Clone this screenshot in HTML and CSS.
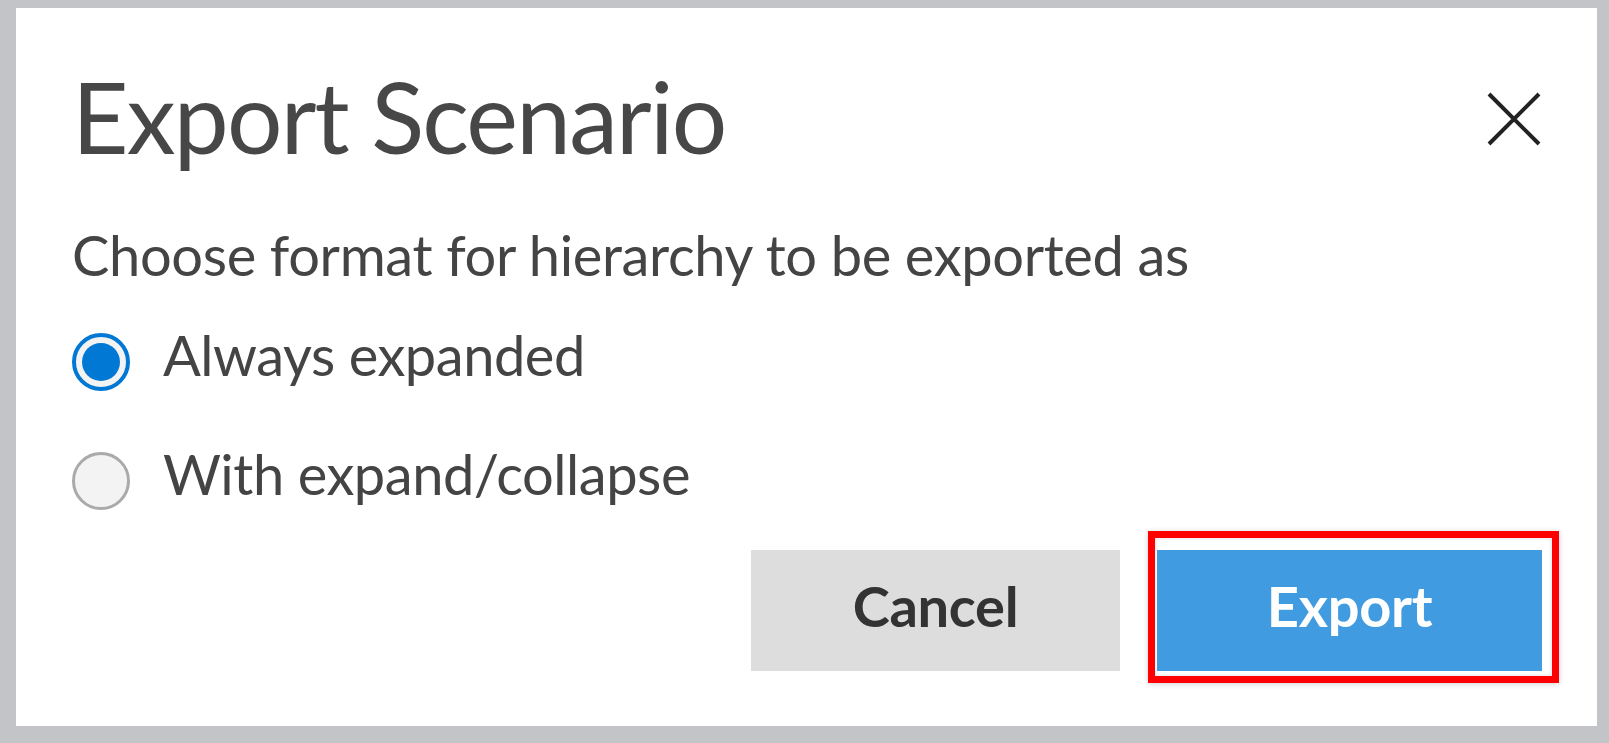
FILE: index.html
```html
<!DOCTYPE html>
<html lang="en">
<head>
<meta charset="utf-8">
<title>Export Scenario</title>
<link rel="stylesheet" href="styles.css">
</head>
<body>
<div class="dialog">
  <div class="header">
    <h1 class="title">Export Scenario</h1>
    <button class="close" aria-label="Close">
      <svg width="54" height="54" viewBox="0 0 54 54"><path d="M2 2 L52 52 M52 2 L2 52" stroke="#222" stroke-width="4" fill="none"/></svg>
    </button>
  </div>
  <p class="subtitle">Choose format for hierarchy to be exported as</p>
  <div class="options">
    <label class="option">
      <span class="radio checked"><span class="dot"></span></span>
      <span class="label">Always expanded</span>
    </label>
    <label class="option">
      <span class="radio"></span>
      <span class="label">With expand/collapse</span>
    </label>
  </div>
  <div class="actions">
    <button class="btn btn-cancel">Cancel</button>
    <div class="highlight">
      <button class="btn btn-export">Export</button>
    </div>
  </div>
</div>
</body>
</html>
```
FILE: styles.css
```css
html, body {
  margin: 0;
  padding: 0;
}
body {
  background: #c2c4c7;
  width: 1609px;
  height: 743px;
  overflow: hidden;
  font-family: "Lato", "Open Sans", sans-serif;
  color: #444;
}
.dialog {
  box-sizing: border-box;
  margin: 8px 12px 0 16px;
  width: 1581px;
  height: 718px;
  background: #fff;
  padding: 58px 38px 0 56px;
  display: flex;
  flex-direction: column;
}
.header {
  display: flex;
  justify-content: space-between;
  align-items: flex-start;
  margin-right: 18px;
}
.title {
  margin: 0;
  font-size: 98px;
  line-height: 100px;
  font-weight: 400;
  letter-spacing: -1.8px;
  color: #474747;
}
.close {
  margin-top: 26px;
  padding: 0;
  border: 0;
  background: none;
  width: 54px;
  height: 54px;
  display: block;
}
.close svg { display: block; }
.subtitle {
  margin: 59px 0 0;
  font-size: 56px;
  line-height: 60px;
  letter-spacing: -0.35px;
  color: #444;
}
.options {
  margin-top: 48px;
  display: flex;
  flex-direction: column;
  gap: 61px;
}
.option {
  display: flex;
  align-items: flex-start;
  gap: 33px;
}
.radio {
  box-sizing: border-box;
  width: 58px;
  height: 58px;
  border-radius: 50%;
  border: 3px solid #aaa;
  background: #f3f3f3;
  display: flex;
  align-items: center;
  justify-content: center;
  flex: none;
}
.radio.checked {
  border: 4px solid #0078d4;
}
.dot {
  width: 38px;
  height: 38px;
  border-radius: 50%;
  background: #0078d4;
}
.label {
  font-size: 56px;
  line-height: 44px;
  letter-spacing: -0.45px;
  color: #444;
}
.actions {
  margin-top: 21px;
  display: flex;
  justify-content: flex-end;
  align-items: flex-start;
  gap: 28px;
}
.btn {
  box-sizing: border-box;
  height: 121px;
  border: 0;
  font-family: "Lato", "Open Sans", sans-serif;
  font-size: 56px;
  font-weight: 700;
  letter-spacing: -0.3px;
  display: flex;
  align-items: center;
  justify-content: center;
  padding: 0 0 11px;
}
.btn-cancel {
  margin-top: 19px;
  width: 369px;
  background: #dddddd;
  color: #333;
}
.highlight {
  border: 7px solid #ff0000;
  padding: 12px 10px 5px 2px;
  background: #fff;
  box-shadow: 0 1px 6px rgba(0,0,0,0.18), inset 0 0 4px rgba(0,0,0,0.15);
}
.btn-export {
  width: 385px;
  background: #419be0;
  color: #fff;
}
```
